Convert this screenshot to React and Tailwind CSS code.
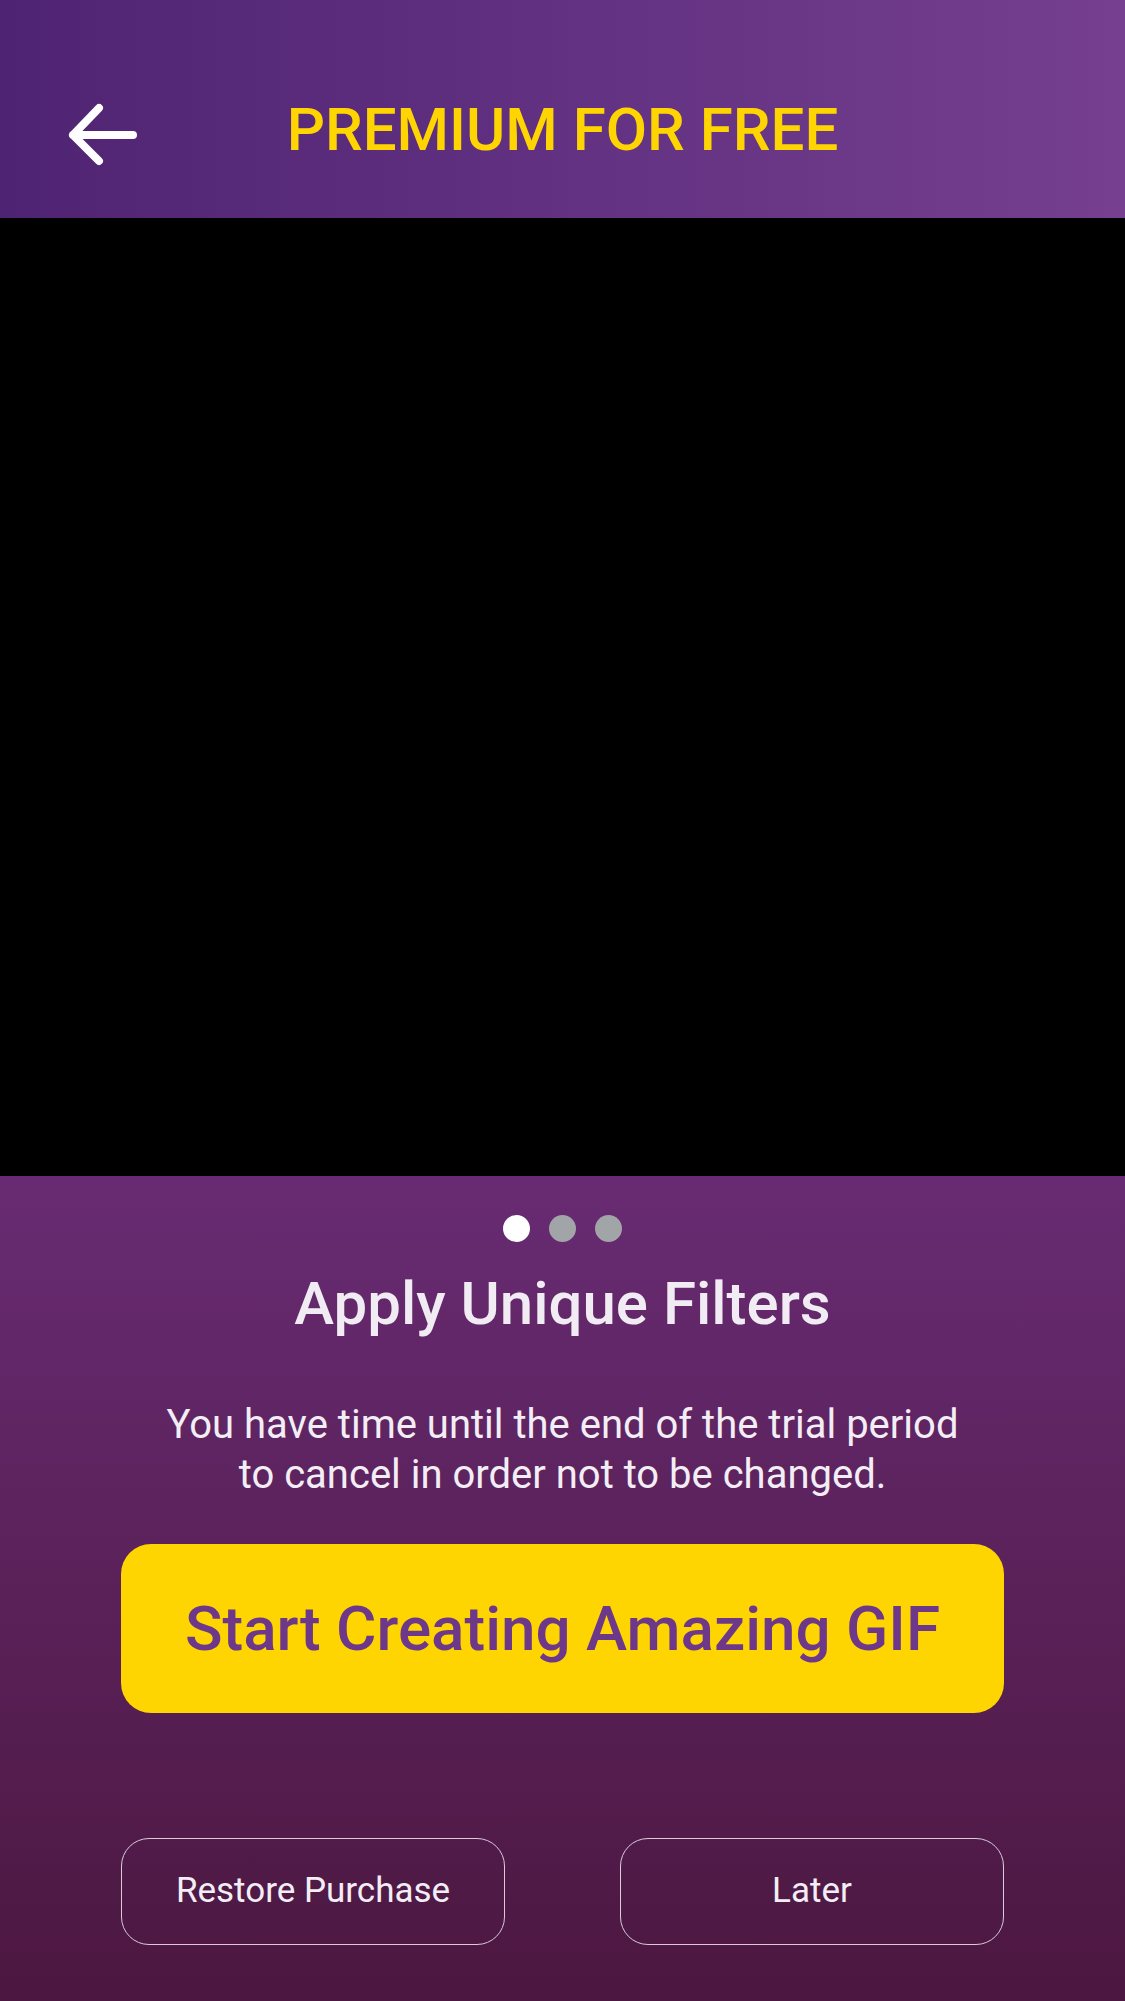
import React from 'react';

const font = { fontFamily: 'Roboto, "Liberation Sans", sans-serif' };

function BackArrow() {
  return (
    <svg width="80" height="70" viewBox="64 100 80 70" fill="none" className="absolute left-[64px] top-[100px]">
      <path d="M73 135H133M73 135L99 108M73 135L99 161" stroke="white" strokeWidth="8" strokeLinecap="round" strokeLinejoin="round" />
    </svg>
  );
}

export default function App() {
  const dots = [true, false, false];
  return (
    <div className="w-[1125px] h-[2001px] flex flex-col overflow-hidden" style={font}>
      <div className="relative h-[218px] shrink-0 bg-gradient-to-r from-[#4f2373] to-[#763f8f] flex items-center justify-center pt-[42px]">
        <BackArrow />
        <h1 className="text-[60px] leading-none text-[#fed500] font-medium">PREMIUM FOR FREE</h1>
      </div>

      <div className="h-[958px] shrink-0 bg-black" />

      <div className="flex-1 bg-gradient-to-b from-[#682b73] to-[#4c1740] flex flex-col items-center">
        <div className="mt-[39px] flex gap-[19px]">
          {dots.map((on, i) => (
            <span key={i} className={`w-[27px] h-[27px] rounded-full ${on ? 'bg-white' : 'bg-[#a2a5a8]'}`} />
          ))}
        </div>

        <h2 className="mt-[32px] text-[60px] leading-none font-medium text-[#f1ecf3]">Apply Unique Filters</h2>

        <p className="mt-[66px] text-[40px] leading-[50px] text-center text-[#f3eef5]">
          You have time until the end of the trial period
          <br />
          to cancel in order not to be changed.
        </p>

        <button className="mt-[44px] w-[883px] h-[169px] rounded-[30px] bg-[#fed500] text-[#6d3889] text-[62px] font-medium flex items-center justify-center">
          Start Creating Amazing GIF
        </button>

        <div className="mt-[125px] w-[883px] flex justify-between">
          <button className="w-[384px] h-[107px] rounded-[28px] border border-[#d9ccdc] text-[35px] text-[#f3eef5]">
            Restore Purchase
          </button>
          <button className="w-[384px] h-[107px] rounded-[28px] border border-[#d9ccdc] text-[35px] text-[#f3eef5]">
            Later
          </button>
        </div>
      </div>
    </div>
  );
}
